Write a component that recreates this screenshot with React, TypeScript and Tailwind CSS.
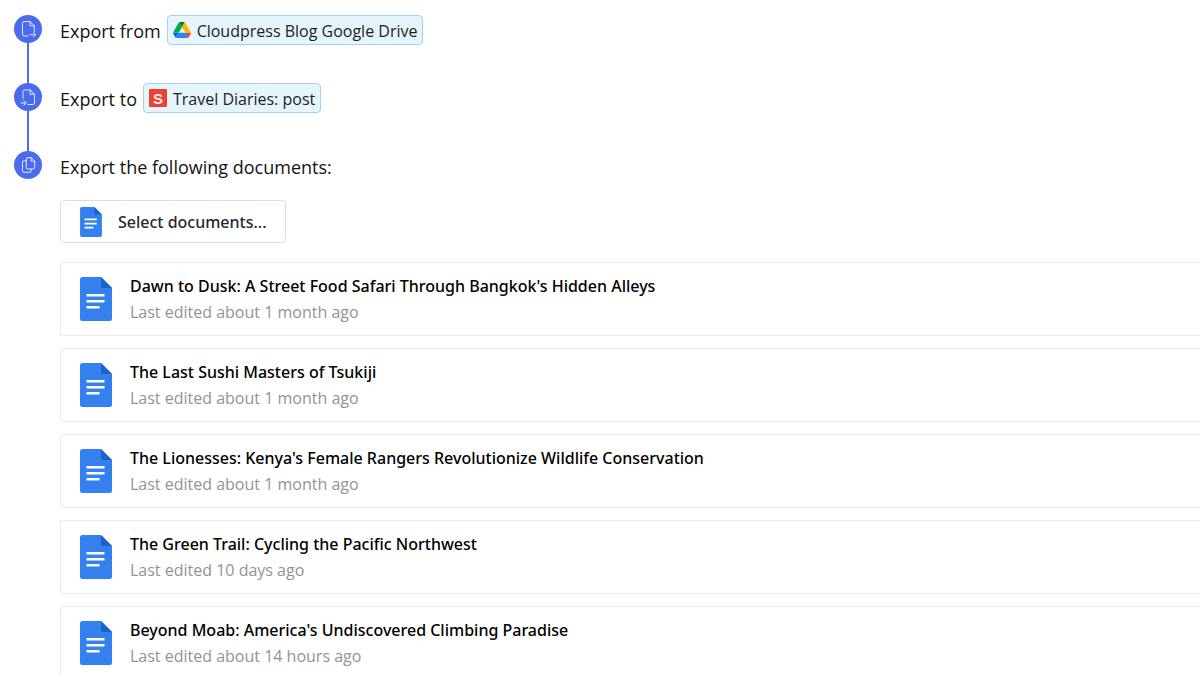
import type { ReactNode } from 'react'

interface Doc {
  id: string
  title: string
  edited: string
}

const documents: Doc[] = [
  { id: 'bangkok', title: "Dawn to Dusk: A Street Food Safari Through Bangkok's Hidden Alleys", edited: 'Last edited about 1 month ago' },
  { id: 'tsukiji', title: 'The Last Sushi Masters of Tsukiji', edited: 'Last edited about 1 month ago' },
  { id: 'kenya', title: "The Lionesses: Kenya's Female Rangers Revolutionize Wildlife Conservation", edited: 'Last edited about 1 month ago' },
  { id: 'cycling', title: 'The Green Trail: Cycling the Pacific Northwest', edited: 'Last edited 10 days ago' },
  { id: 'moab', title: "Beyond Moab: America's Undiscovered Climbing Paradise", edited: 'Last edited about 14 hours ago' },
]

function StepIcon({ children }: { children: ReactNode }) {
  return (
    <svg
      viewBox="0 0 28 28"
      className="size-7 fill-none stroke-[#dfe6ff]"
      strokeWidth="1"
      strokeLinecap="round"
      strokeLinejoin="round"
      aria-hidden="true"
    >
      {children}
    </svg>
  )
}

function ExportFromIcon() {
  return (
    <StepIcon>
      <path d="M14 21H10.2A1.7 1.7 0 0 1 8.5 19.3V8.2A1.7 1.7 0 0 1 10.2 6.5H16L20.3 10.8V16.5" />
      <path d="M16 6.5V10.8H20.3" />
      <path d="M15.7 19.7H21.5M19.3 17.3L21.7 19.7L19.3 22" />
    </StepIcon>
  )
}

function ExportToIcon() {
  return (
    <StepIcon>
      <path d="M9 15.5V8.7A1.7 1.7 0 0 1 10.7 7H16.2L20.5 11.3V19.8A1.7 1.7 0 0 1 18.8 21.5H14" />
      <path d="M16.2 7V11.3H20.5" />
      <path d="M7 20H12M9.8 17.7L12.1 20L9.8 22.3" />
    </StepIcon>
  )
}

function DocumentsIcon() {
  return (
    <StepIcon>
      <path d="M13.8 6.5H17L20.7 10.2V16.5A1.5 1.5 0 0 1 19.2 18H13.8A1.5 1.5 0 0 1 12.3 16.5V8A1.5 1.5 0 0 1 13.8 6.5Z" />
      <path d="M17 6.5V10.2H20.7" />
      <path d="M12.3 9.7H10A1.5 1.5 0 0 0 8.5 11.2V19.8A1.5 1.5 0 0 0 10 21.3H15.7A1.5 1.5 0 0 0 17.2 19.8V18" />
    </StepIcon>
  )
}

function GoogleDriveIcon() {
  return (
    <svg viewBox="0 0 87.3 78" className="h-4 w-[18px] shrink-0" aria-hidden="true">
      <path fill="#0066da" d="m6.6 66.85 3.85 6.65c.8 1.4 1.95 2.5 3.3 3.3l13.75-23.8h-27.5c0 1.55.4 3.1 1.2 4.5z" />
      <path fill="#00ac47" d="m43.65 25-13.75-23.8c-1.35.8-2.5 1.9-3.3 3.3l-25.4 44a9.06 9.06 0 0 0-1.2 4.5h27.5z" />
      <path fill="#ea4335" d="m73.55 76.8c1.35-.8 2.5-1.9 3.3-3.3l1.6-2.75 7.65-13.25c.8-1.4 1.2-2.95 1.2-4.5h-27.502l5.852 11.5z" />
      <path fill="#00832d" d="m43.65 25 13.75-23.8c-1.35-.8-2.9-1.2-4.5-1.2h-18.5c-1.6 0-3.15.45-4.5 1.2z" />
      <path fill="#2684fc" d="m59.8 53h-32.3l-13.75 23.8c1.35.8 2.9 1.2 4.5 1.2h50.8c1.6 0 3.15-.45 4.5-1.2z" />
      <path fill="#ffba00" d="m73.4 26.5-12.7-22c-.8-1.4-1.95-2.5-3.3-3.3l-13.75 23.8 16.15 28h27.45c0-1.55-.4-3.1-1.2-4.5z" />
    </svg>
  )
}

function SanityIcon() {
  return (
    <span
      aria-hidden="true"
      className="flex size-[18px] shrink-0 items-center justify-center rounded-[1px] bg-[#ee4136] font-['Liberation_Sans',sans-serif] text-[15px] leading-none font-bold text-[#fff0ee]"
    >
      S
    </span>
  )
}

function GoogleDocsIcon({ className }: { className: string }) {
  return (
    <svg viewBox="0 0 32 44" className={className} aria-hidden="true">
      <path fill="#3380ee" d="M2.5 0H21L32 11V41.5A2.5 2.5 0 0 1 29.5 44H2.5A2.5 2.5 0 0 1 0 41.5V2.5A2.5 2.5 0 0 1 2.5 0Z" />
      <path fill="#1c62cc" d="M21 0L32 11H23A2 2 0 0 1 21 9Z" />
      <path fill="#fff" d="M6.5 17H24.5V19.5H6.5ZM6.5 23H24.5V25.5H6.5ZM6.5 29H19.5V31.5H6.5Z" />
    </svg>
  )
}

function Tag({ icon, children }: { icon: ReactNode; children: ReactNode }) {
  return (
    <span className="inline-flex h-[30px] items-center gap-1.5 rounded border border-[#a3cff5] bg-[#e6f4fc] px-[5px] text-[16px] text-[#1c2329]">
      {icon}
      <span className="pt-0.5">{children}</span>
    </span>
  )
}

interface StepProps {
  icon: ReactNode
  last?: boolean
  children: ReactNode
}

function Step({ icon, last, children }: StepProps) {
  return (
    <li className="flex gap-[18px]">
      {/* Marker and connecting line */}
      <div className="flex w-7 shrink-0 flex-col items-center">
        <div className="size-7 rounded-full bg-[#4a6cec]">{icon}</div>
        {!last && <div className="w-0.5 grow bg-[#4f6fdc]" />}
      </div>
      <div className={last ? 'min-w-0 grow' : 'min-w-0 grow pb-[38px]'}>{children}</div>
    </li>
  )
}

function DocumentCard({ doc }: { doc: Doc }) {
  return (
    <li className="flex items-center gap-[18px] rounded-l border border-r-0 border-[#ebebeb] py-2.5 pl-[19px]">
      <GoogleDocsIcon className="h-11 w-8 shrink-0" />
      <div className="min-w-0 text-[16px] leading-[26px]">
        <h3 className="font-['Noto_Sans',sans-serif] font-medium text-black">{doc.title}</h3>
        <p className="text-[#8f9499]">{doc.edited}</p>
      </div>
    </li>
  )
}

export default function App() {
  return (
    <main className="h-screen overflow-hidden bg-white font-['Segoe_UI','Open_Sans',sans-serif] text-[18px] text-[#141414]">
      <ol className="pt-[15px] pl-3.5">
        <Step icon={<ExportFromIcon />}>
          <div className="flex h-[30px] items-center gap-1.5">
            <span className="pt-0.5">Export from</span>
            <Tag icon={<GoogleDriveIcon />}>Cloudpress Blog Google Drive</Tag>
          </div>
        </Step>

        <Step icon={<ExportToIcon />}>
          <div className="flex h-[30px] items-center gap-1.5">
            <span className="pt-0.5">Export to</span>
            <Tag icon={<SanityIcon />}>Travel Diaries: post</Tag>
          </div>
        </Step>

        <Step icon={<DocumentsIcon />} last>
          <h2 className="flex h-[30px] items-center pt-0.5">Export the following documents:</h2>

          <button
            type="button"
            className="mt-[19px] flex h-[43px] items-center gap-4 rounded border border-[#dedede] pr-[18px] pl-[19px] font-['Noto_Sans',sans-serif] text-[16px] font-medium text-[#24282d]"
          >
            <GoogleDocsIcon className="h-[30px] w-[22px]" />
            Select documents...
          </button>

          <ul className="mt-[19px] flex flex-col gap-3">
            {documents.map((doc) => (
              <DocumentCard key={doc.id} doc={doc} />
            ))}
          </ul>
        </Step>
      </ol>
    </main>
  )
}
